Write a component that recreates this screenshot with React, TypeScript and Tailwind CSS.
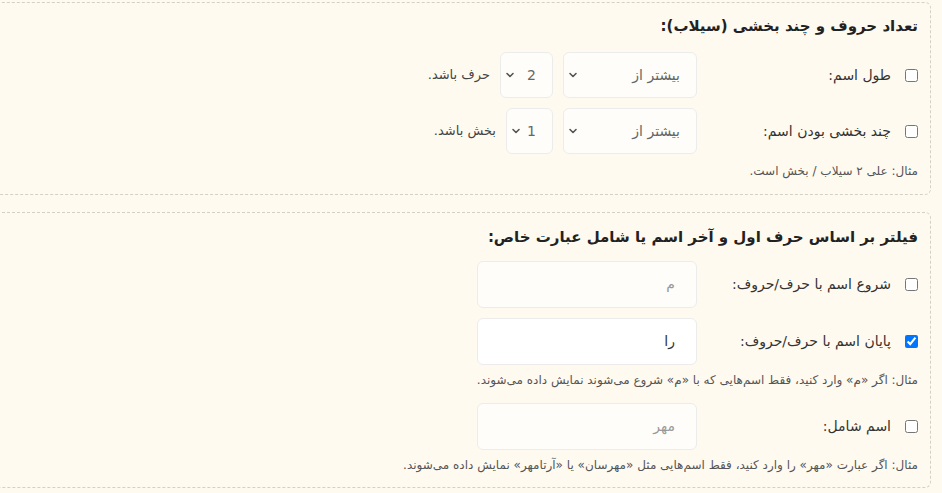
import React from "react";

const font = { fontFamily: '"DejaVu Sans", "Noto Sans", sans-serif' };

function Chevron() {
  return (
    <svg width="10" height="10" viewBox="0 0 10 10" className="pointer-events-none absolute left-[4px] top-1/2 -translate-y-1/2">
      <path d="M2 3.5 L5 6.5 L8 3.5" fill="none" stroke="#555" strokeWidth="1.6" strokeLinecap="round" strokeLinejoin="round" />
    </svg>
  );
}

function FakeSelect({ value, className }: { value: string; className: string }) {
  return (
    <div className={"relative flex h-[46px] items-center justify-start rounded-[6px] border border-[#ececec] bg-[#fffdf9] pr-[16px] text-[14px] text-[#666] " + className}>
      <span>{value}</span>
      <Chevron />
    </div>
  );
}

function Check({ checked }: { checked?: boolean }) {
  return <input type="checkbox" defaultChecked={checked} className="h-[13px] w-[13px] shrink-0" />;
}

function TextInput({ value, placeholder, active }: { value?: string; placeholder: string; active?: boolean }) {
  return (
    <div className={"flex h-[47px] w-[220px] items-center rounded-[6px] border border-[#ececec] pr-[21px] text-[14px] " + (active ? "bg-white text-[#333]" : "bg-[#fffdf9] text-[#999]")}>
      {value ?? placeholder}
    </div>
  );
}

function Label({ text, checked }: { text: string; checked?: boolean }) {
  return (
    <label className="flex w-[221px] shrink-0 items-center gap-[14px] text-[14px] text-[#333]">
      <Check checked={checked} />
      <span>{text}</span>
    </label>
  );
}

export default function App() {
  return (
    <div dir="rtl" style={font} className="min-h-[493px] w-[942px] overflow-hidden bg-[#fffaf0] pr-[11px] pt-[2px]">
      <div className="w-[1400px] rounded-[6px] border border-dashed border-[#d4d0c8] bg-[#fffaf0] px-[12px] pb-[14px] pt-[10px]">
        <h2 className="text-[15px] font-bold leading-[26px] text-[#222]">تعداد حروف و چند بخشی (سیلاب):</h2>
        <div className="mt-[13px] flex flex-col gap-[10px]">
          <div className="flex items-center">
            <Label text="طول اسم:" />
            <FakeSelect value="بیشتر از" className="w-[134px]" />
            <FakeSelect value="2" className="mr-[10px] w-[53px]" />
            <span className="mr-[10px] text-[13px] text-[#444]">حرف باشد.</span>
          </div>
          <div className="flex items-center">
            <Label text="چند بخشی بودن اسم:" />
            <FakeSelect value="بیشتر از" className="w-[134px]" />
            <FakeSelect value="1" className="mr-[10px] w-[47px]" />
            <span className="mr-[10px] text-[13px] text-[#444]">بخش باشد.</span>
          </div>
        </div>
        <p className="mt-[8px] text-[12px] leading-[18px] text-[#555]">مثال: علی ۲ سیلاب / بخش است.</p>
      </div>

      <div className="mt-[17px] w-[1400px] rounded-[6px] border border-dashed border-[#d4d0c8] bg-[#fffaf0] px-[12px] pb-[13px] pt-[11px]">
        <h2 className="text-[15px] font-bold leading-[26px] text-[#222]">فیلتر بر اساس حرف اول و آخر اسم یا شامل عبارت خاص:</h2>
        <div className="mt-[11px] flex flex-col gap-[10px]">
          <div className="flex items-center">
            <Label text="شروع اسم با حرف/حروف:" />
            <TextInput placeholder="م" />
          </div>
          <div className="flex items-center">
            <Label text="پایان اسم با حرف/حروف:" checked />
            <TextInput value="را" placeholder="" active />
          </div>
        </div>
        <p className="mt-[6px] text-[12px] leading-[18px] text-[#555]">مثال: اگر «م» وارد کنید، فقط اسم‌هایی که با «م» شروع می‌شوند نمایش داده می‌شوند.</p>
        <div className="mt-[14px] flex items-center">
          <Label text="اسم شامل:" />
          <TextInput placeholder="مهر" />
        </div>
        <p className="mt-[6px] text-[12px] leading-[18px] text-[#555]">مثال: اگر عبارت «مهر» را وارد کنید، فقط اسم‌هایی مثل «مهرسان» یا «آرتامهر» نمایش داده می‌شوند.</p>
      </div>
    </div>
  );
}
